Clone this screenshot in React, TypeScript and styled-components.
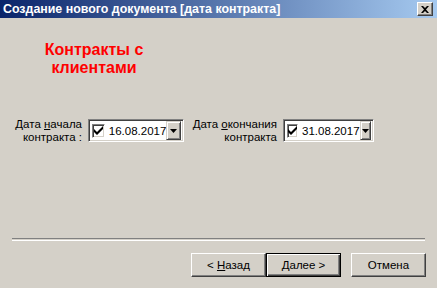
import styled, { createGlobalStyle } from "styled-components";

const GlobalStyle = createGlobalStyle`
  html, body {
    margin: 0;
    padding: 0;
    background: #d4d0c8;
  }
  body {
    font-family: "Liberation Sans", Arial, sans-serif;
    font-size: 11px;
    color: #000;
  }
`;

const DatePicker = ({ value, width }: { value: string; width: number }) => {
  return (
    <Picker width={width}>
      <CheckBox>
        <svg width="9" height="9" viewBox="0 0 9 9">
          <path d="M0 3 L3 6 L9 0 L9 3 L3 9 L0 6 Z" fill="#000" />
        </svg>
      </CheckBox>
      <DateText>{value}</DateText>
      <DropButton>
        <svg width="7" height="4" viewBox="0 0 7 4">
          <path d="M0 0 H7 L3.5 4 Z" fill="#000" />
        </svg>
      </DropButton>
    </Picker>
  );
};

export default function App() {
  return (
    <>
      <GlobalStyle />
      <Window>
        <TitleBar>
          <span>Создание нового документа [дата контракта]</span>
          <CloseButton>
            <svg width="8" height="7" viewBox="0 0 8 7">
              <path
                d="M0 0 H2 L4 2 L6 0 H8 L5 3.5 L8 7 H6 L4 5 L2 7 H0 L3 3.5 Z"
                fill="#000"
              />
            </svg>
          </CloseButton>
        </TitleBar>
        <Content>
          <Heading>
            Контракты с
            <br />
            клиентами
          </Heading>
          <FieldRow>
            <FieldLabel width={88}>
              Дата <u>н</u>ачала
              <br />
              контракта :
            </FieldLabel>
            <DatePicker value="16.08.2017" width={96} />
            <FieldLabel width={99}>
              Дата <u>о</u>кончания
              <br />
              контракта
            </FieldLabel>
            <DatePicker value="31.08.2017" width={91} />
          </FieldRow>
          <Spacer />
          <Separator />
          <ButtonRow>
            <Button>
              {"< "}
              <u>Н</u>азад
            </Button>
            <Button isDefault>
              <u>Д</u>алее{" >"}
            </Button>
            <Button gapLeft={10}>Отмена</Button>
          </ButtonRow>
        </Content>
      </Window>
    </>
  );
}

const Window = styled.div`
  width: 437px;
  height: 288px;
  background: #d4d0c8;
  display: flex;
  flex-direction: column;
  overflow: hidden;
`;

const TitleBar = styled.div`
  height: 18px;
  padding: 0 4px 0 3px;
  display: flex;
  align-items: center;
  justify-content: space-between;
  background: linear-gradient(to right, #0a246a, #a6caf0);
  color: #fff;
  font-weight: bold;
  font-size: 12.4px;
  white-space: nowrap;
`;

const CloseButton = styled.div`
  width: 16px;
  height: 14px;
  box-sizing: border-box;
  background: #d4d0c8;
  border: 1px solid;
  border-color: #fff #404040 #404040 #fff;
  box-shadow: inset -1px -1px #808080;
  display: flex;
  align-items: center;
  justify-content: center;
`;

const Content = styled.div`
  flex: 1;
  display: flex;
  flex-direction: column;
`;

const Heading = styled.div`
  width: 188px;
  margin-top: 23px;
  text-align: center;
  color: #ff0000;
  font-weight: bold;
  font-size: 16px;
  line-height: 18px;
`;

const FieldRow = styled.div`
  margin-top: 42px;
  display: flex;
  align-items: flex-start;
`;

const FieldLabel = styled.div<{ width: number }>`
  width: ${(p) => p.width}px;
  box-sizing: border-box;
  padding-right: 6px;
  margin-top: -1px;
  text-align: right;
  font-size: 11.5px;
  line-height: 13px;
  white-space: nowrap;
`;

const Picker = styled.div<{ width: number }>`
  width: ${(p) => p.width}px;
  height: 23px;
  box-sizing: border-box;
  background: #fff;
  border: 1px solid;
  border-color: #808080 #fff #fff #808080;
  box-shadow: inset 1px 1px #404040, inset -1px -1px #d4d0c8;
  display: flex;
  align-items: center;
  padding: 2px;
`;

const CheckBox = styled.div`
  width: 14px;
  height: 14px;
  box-sizing: border-box;
  margin-left: 1px;
  background: #fff;
  border: 1px solid;
  border-color: #808080 #fff #fff #808080;
  box-shadow: inset 1px 1px #404040, inset -1px -1px #d4d0c8;
  display: flex;
  align-items: center;
  justify-content: center;
`;

const DateText = styled.div`
  flex: 1;
  padding-left: 4px;
  font-size: 11.5px;
`;

const DropButton = styled.div`
  width: 16px;
  height: 19px;
  box-sizing: border-box;
  background: #d4d0c8;
  border: 1px solid;
  border-color: #d4d0c8 #404040 #404040 #d4d0c8;
  box-shadow: inset 1px 1px #fff, inset -1px -1px #808080;
  display: flex;
  align-items: center;
  justify-content: center;
`;

const Spacer = styled.div`
  flex: 1;
`;

const Separator = styled.div`
  margin: 0 12px;
  height: 1px;
  border-top: 1px solid #808080;
  border-bottom: 1px solid #fff;
`;

const ButtonRow = styled.div`
  display: flex;
  justify-content: flex-end;
  padding: 12px 11px 11px 0;
`;

const Button = styled.div<{ isDefault?: boolean; gapLeft?: number }>`
  width: 75px;
  height: 24px;
  box-sizing: border-box;
  margin-left: ${(p) => p.gapLeft ?? 0}px;
  background: #d4d0c8;
  border: 1px solid;
  border-color: ${(p) =>
    p.isDefault ? "#000" : "#fff #404040 #404040 #fff"};
  box-shadow: ${(p) =>
    p.isDefault
      ? "inset 1px 1px #fff, inset -1px -1px #404040, inset -2px -2px #808080"
      : "inset -1px -1px #808080"};
  display: flex;
  align-items: center;
  justify-content: center;
  font-size: 11.5px;
  white-space: pre;
`;
